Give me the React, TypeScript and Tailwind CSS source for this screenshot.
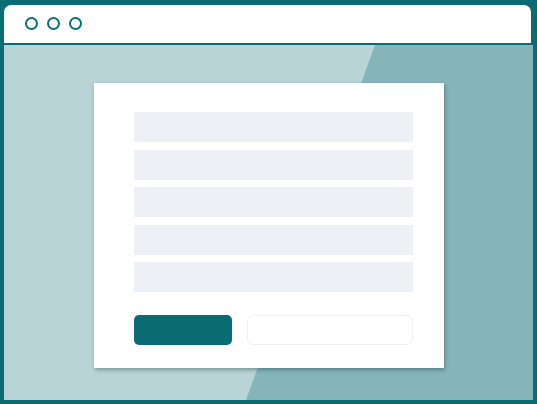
export default function App() {
  const rows = [0, 1, 2, 3, 4];

  return (
    <div className="flex h-[404px] w-[537px] flex-col bg-[#0b6d73] px-[4px] pb-[4px] pt-[5px]">
      {/* title bar */}
      <div className="mr-[2px] flex h-[40px] shrink-0 items-center gap-[9px] rounded-t-[7px] border-b-2 border-[#0b6d73] bg-white pl-[21px] pb-[1px]">
        <span className="h-[13px] w-[13px] rounded-full border-2 border-[#0b6d73]" />
        <span className="h-[13px] w-[13px] rounded-full border-2 border-[#0b6d73]" />
        <span className="h-[13px] w-[13px] rounded-full border-2 border-[#0b6d73]" />
      </div>

      {/* page */}
      <div className="relative flex-1 overflow-hidden bg-[#b8d4d7] pl-[90px] pt-[38px]">
        <div
          aria-hidden="true"
          className="absolute inset-0 bg-[#85b5b8] [clip-path:polygon(371px_0,100%_0,100%_100%,242px_100%)]"
        />
        <div className="relative flex h-[285px] w-[350px] flex-col bg-white pl-[40px] pr-[31px] pt-[29px] shadow-[1px_2px_4px_rgba(0,40,45,0.35)]">
          <div className="flex flex-col gap-[7.5px]">
            {rows.map((r) => (
              <div key={r} className="h-[30px] w-[279px] bg-[#edf0f4]" />
            ))}
          </div>
          <div className="mt-[23px] flex gap-[15px]">
            <div className="h-[30px] w-[98px] shrink-0 rounded-[5px] bg-[#0b6d73]" />
            <div className="h-[30px] w-[166px] shrink-0 rounded-[6px] border border-[#eef0f3] bg-white" />
          </div>
        </div>
      </div>
    </div>
  );
}
